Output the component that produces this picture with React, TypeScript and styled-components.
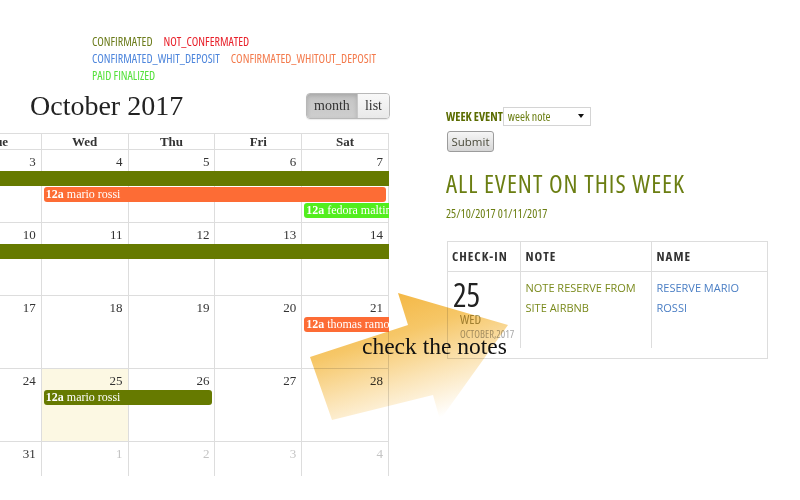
import React from "react";
import styled, { createGlobalStyle } from "styled-components";

const SERIF = `"Liberation Serif", "Times New Roman", serif`;
const SANS = `"Open Sans", "Liberation Sans", sans-serif`;

const OLIVE_BAR = "#667a00";
const ORANGE_BAR = "#fd6c35";
const GREEN_BAR = "#52ee1e";
const OLIVE_TEXT = "#6b7e12";

const GlobalStyle = createGlobalStyle`
  html, body { margin: 0; padding: 0; background: #fff; }
  body { width: 800px; height: 500px; overflow: hidden; }
  * { box-sizing: border-box; }
`;

const Page = styled.div`
  position: relative;
  display: flex;
  width: 800px;
  height: 500px;
  overflow: hidden;
`;

const LeftCol = styled.div`
  width: 390px;
  flex-shrink: 0;
  overflow: hidden;
  padding-top: 33px;
`;

const Legend = styled.div`
  margin-left: 92px;
  font-family: ${SANS};
  font-stretch: 75%;
  font-size: 12px;
  line-height: 17px;
`;

const LegendRow = styled.div`
  display: flex;
  gap: 11px;
`;

const LegendItem = styled.span<{ $c: string }>`
  color: ${(p) => p.$c};
`;

const Toolbar = styled.div`
  display: flex;
  align-items: center;
  justify-content: space-between;
  height: 28px;
  margin-top: 8px;
  margin-bottom: 13px;
`;

const Title = styled.h2`
  margin: 0 0 0 30px;
  font-family: ${SERIF};
  font-size: 28px;
  line-height: 28px;
  font-weight: normal;
  color: #222;
`;

const BtnGroup = styled.div`
  display: flex;
  height: 26px;
  border: 1px solid #b8b8b8;
  border-radius: 4px;
  overflow: hidden;
  box-shadow: 0 1px 1px rgba(0, 0, 0, 0.08);
`;

const ToolBtn = styled.button<{ $active?: boolean }>`
  border: none;
  margin: 0;
  padding: 0 7px;
  font-family: ${SERIF};
  font-size: 14px;
  color: #333;
  background: ${(p) =>
    p.$active
      ? "linear-gradient(#c4c4c4, #cecece)"
      : "linear-gradient(#f8f8f8, #e9e9e9)"};
  box-shadow: ${(p) =>
    p.$active ? "inset 0 2px 4px rgba(0,0,0,0.15)" : "none"};
  & + & {
    border-left: 1px solid #c8c8c8;
  }
`;

const Calendar = styled.div`
  width: 434px;
  margin-left: -45px;
  font-family: ${SERIF};
  color: #333;
`;

const HeadRow = styled.div`
  display: grid;
  grid-template-columns: repeat(5, 1fr);
  border-top: 1px solid #ddd;
  border-bottom: 1px solid #ddd;
`;

const HeadCell = styled.div`
  text-align: center;
  font-weight: bold;
  font-size: 13px;
  line-height: 15px;
  border-right: 1px solid #ddd;
`;

const Week = styled.div<{ $short?: boolean }>`
  display: grid;
  grid-template-columns: repeat(5, 1fr);
  grid-template-rows: ${(p) =>
    p.$short ? "20px 1fr" : "20px 16px 16px 16px 1fr"};
  height: ${(p) => (p.$short ? 34 : 73)}px;
`;

const DayBg = styled.div<{ $col: number; $today?: boolean; $last?: boolean }>`
  grid-column: ${(p) => p.$col};
  grid-row: 1 / -1;
  border-right: 1px solid #ddd;
  border-bottom: ${(p) => (p.$last ? "none" : "1px solid #ddd")};
  background: ${(p) => (p.$today ? "#fcf8e3" : "transparent")};
`;

const DayNum = styled.div<{ $col: number; $other?: boolean }>`
  grid-column: ${(p) => p.$col};
  grid-row: 1;
  text-align: right;
  padding: 4px 6px 0 0;
  font-size: 13px;
  line-height: 15px;
  color: ${(p) => (p.$other ? "#c4c4c4" : "#333")};
`;

const EventBar = styled.div<{
  $col: number;
  $span: number;
  $row: number;
  $bg: string;
  $start?: boolean;
  $end?: boolean;
}>`
  grid-column: ${(p) => p.$col} / span ${(p) => p.$span};
  grid-row: ${(p) => p.$row};
  margin: 1px ${(p) => (p.$end ? 3 : 0)}px 0 ${(p) => (p.$start ? 2 : 0)}px;
  height: 15px;
  padding-left: 2px;
  background: ${(p) => p.$bg};
  color: #fff;
  font-size: 12px;
  line-height: 15px;
  white-space: nowrap;
  overflow: hidden;
  border-radius: ${(p) =>
    `${p.$start ? 3 : 0}px ${p.$end ? 3 : 0}px ${p.$end ? 3 : 0}px ${
      p.$start ? 3 : 0
    }px`};
  & b {
    font-weight: bold;
  }
`;

const RightCol = styled.div`
  margin-left: 56px;
  padding-top: 106px;
  font-family: ${SANS};
  font-stretch: 75%;
`;

const FormRow = styled.div`
  display: flex;
  align-items: center;
  height: 20px;
`;

const Label = styled.label`
  font-size: 12px;
  font-weight: bold;
  color: #5a6c00;
`;

const SelectBox = styled.div`
  display: flex;
  align-items: center;
  justify-content: space-between;
  width: 88px;
  height: 19px;
  padding: 0 6px 0 4px;
  border: 1px solid #d4d4d4;
  font-size: 12px;
  color: ${OLIVE_TEXT};
`;

const Caret = styled.span`
  width: 0;
  height: 0;
  border-left: 3.5px solid transparent;
  border-right: 3.5px solid transparent;
  border-top: 4px solid #111;
`;

const SubmitBtn = styled.button`
  display: block;
  margin-top: 5px;
  margin-left: 1px;
  width: 47px;
  height: 21px;
  padding: 0;
  font-family: ${SANS};
  font-stretch: 100%;
  font-size: 11.5px;
  color: #4a4a3a;
  border: 1px solid #9c9c9c;
  border-radius: 3px;
  background: linear-gradient(#f6f6f6, #d6d6d6);
`;

const Heading = styled.h1`
  margin: 18px 0 0;
  font-size: 25px;
  line-height: 26px;
  letter-spacing: 1px;
  font-weight: normal;
  color: ${OLIVE_TEXT};
`;

const Dates = styled.div`
  margin-top: 11px;
  font-size: 12px;
  line-height: 14px;
  color: ${OLIVE_TEXT};
`;

const TableBox = styled.div`
  width: 321px;
  margin-top: 20px;
  margin-left: 1px;
  border: 1px solid #ddd;
  padding-bottom: 10px;
`;

const Table = styled.table`
  width: 100%;
  border-collapse: collapse;
  table-layout: fixed;
`;

const Th = styled.th<{ $w?: number }>`
  width: ${(p) => (p.$w ? `${p.$w}px` : "auto")};
  height: 29px;
  padding: 0 4px;
  text-align: left;
  font-size: 13px;
  font-weight: bold;
  letter-spacing: 1px;
  color: #333;
  border-bottom: 1px solid #ddd;
  & + & {
    border-left: 1px solid #ddd;
    padding-left: 5px;
  }
`;

const BodyRow = styled.tr`
  height: 77px;
`;

const Td = styled.td<{ $c?: string }>`
  vertical-align: top;
  padding: 6px 4px 0;
  font-size: 11px;
  line-height: 20px;
  font-stretch: 100%;
  color: ${(p) => p.$c || "#333"};
  & + & {
    border-left: 1px solid #ddd;
    padding-left: 5px;
  }
`;

const CheckCell = styled(Td)`
  font-stretch: 75%;
  padding-left: 5px;
`;

const BigDay = styled.div`
  margin-top: 1px;
  font-size: 32px;
  line-height: 32px;
  color: #222;
`;

const WeekDay = styled.div`
  margin-left: 7px;
  font-size: 13px;
  line-height: 16px;
  color: #a59c62;
`;

const MonthYear = styled.div`
  margin-left: 7px;
  font-size: 10.5px;
  line-height: 14px;
  color: #a8a8a8;
`;

const ArrowSvg = styled.svg`
  position: absolute;
  left: 300px;
  top: 285px;
  width: 215px;
  height: 140px;
  mix-blend-mode: multiply;
  pointer-events: none;
`;

const ArrowText = styled.span`
  position: absolute;
  left: 362px;
  top: 335px;
  font-family: ${SERIF};
  font-size: 23.5px;
  line-height: 23.5px;
  color: #111;
  white-space: nowrap;
  pointer-events: none;
`;

type Ev = {
  col: number;
  span: number;
  row: number;
  bg: string;
  start?: boolean;
  end?: boolean;
  title?: string;
};

type WeekData = {
  days: { n: number; other?: boolean; today?: boolean }[];
  events: Ev[];
  last?: boolean;
};

const weeks: WeekData[] = [
  {
    days: [{ n: 3 }, { n: 4 }, { n: 5 }, { n: 6 }, { n: 7 }],
    events: [
      { col: 1, span: 5, row: 2, bg: OLIVE_BAR },
      { col: 2, span: 4, row: 3, bg: ORANGE_BAR, start: true, end: true, title: "mario rossi" },
      { col: 5, span: 1, row: 4, bg: GREEN_BAR, start: true, title: "fedora maltinti" },
    ],
  },
  {
    days: [{ n: 10 }, { n: 11 }, { n: 12 }, { n: 13 }, { n: 14 }],
    events: [{ col: 1, span: 5, row: 2, bg: OLIVE_BAR }],
  },
  {
    days: [{ n: 17 }, { n: 18 }, { n: 19 }, { n: 20 }, { n: 21 }],
    events: [
      { col: 5, span: 1, row: 2, bg: ORANGE_BAR, start: true, title: "thomas ramos" },
    ],
  },
  {
    days: [{ n: 24 }, { n: 25, today: true }, { n: 26 }, { n: 27 }, { n: 28 }],
    events: [
      { col: 2, span: 2, row: 2, bg: OLIVE_BAR, start: true, end: true, title: "mario rossi" },
    ],
  },
  {
    days: [
      { n: 31 },
      { n: 1, other: true },
      { n: 2, other: true },
      { n: 3, other: true },
      { n: 4, other: true },
    ],
    events: [],
    last: true,
  },
];

export default function App() {
  return (
    <>
      <GlobalStyle />
      <Page>
        <LeftCol>
          <Legend>
            <LegendRow>
              <LegendItem $c="#6b7b1a">CONFIRMATED</LegendItem>
              <LegendItem $c="#e8202a">NOT_CONFERMATED</LegendItem>
            </LegendRow>
            <LegendRow>
              <LegendItem $c="#4e86dc">CONFIRMATED_WHIT_DEPOSIT</LegendItem>
              <LegendItem $c="#f37a4c">CONFIRMATED_WHITOUT_DEPOSIT</LegendItem>
            </LegendRow>
            <LegendRow>
              <LegendItem $c="#55e13b">PAID FINALIZED</LegendItem>
            </LegendRow>
          </Legend>

          <Toolbar>
            <Title>October 2017</Title>
            <BtnGroup>
              <ToolBtn $active>month</ToolBtn>
              <ToolBtn>list</ToolBtn>
            </BtnGroup>
          </Toolbar>

          <Calendar>
            <HeadRow>
              {["Tue", "Wed", "Thu", "Fri", "Sat"].map((d) => (
                <HeadCell key={d}>{d}</HeadCell>
              ))}
            </HeadRow>
            {weeks.map((w, wi) => (
              <Week key={wi} $short={w.last}>
                {w.days.map((d, i) => (
                  <DayBg key={`bg${i}`} $col={i + 1} $today={d.today} $last={w.last} />
                ))}
                {w.days.map((d, i) => (
                  <DayNum key={`n${i}`} $col={i + 1} $other={d.other}>
                    {d.n}
                  </DayNum>
                ))}
                {w.events.map((e, ei) => (
                  <EventBar
                    key={`e${ei}`}
                    $col={e.col}
                    $span={e.span}
                    $row={e.row}
                    $bg={e.bg}
                    $start={e.start}
                    $end={e.end}
                  >
                    {e.title && (
                      <>
                        <b>12a</b> {e.title}
                      </>
                    )}
                  </EventBar>
                ))}
              </Week>
            ))}
          </Calendar>
        </LeftCol>

        <RightCol>
          <FormRow>
            <Label>WEEK EVENT</Label>
            <SelectBox>
              <span>week note</span>
              <Caret />
            </SelectBox>
          </FormRow>
          <SubmitBtn>Submit</SubmitBtn>
          <Heading>ALL EVENT ON THIS WEEK</Heading>
          <Dates>25/10/2017 01/11/2017</Dates>
          <TableBox>
            <Table>
              <thead>
                <tr>
                  <Th $w={72}>CHECK-IN</Th>
                  <Th $w={131}>NOTE</Th>
                  <Th>NAME</Th>
                </tr>
              </thead>
              <tbody>
                <BodyRow>
                  <CheckCell>
                    <BigDay>25</BigDay>
                    <WeekDay>WED</WeekDay>
                    <MonthYear>OCTOBER,2017</MonthYear>
                  </CheckCell>
                  <Td $c="#7a8a1c">NOTE RESERVE FROM SITE AIRBNB</Td>
                  <Td $c="#4a7ec4">RESERVE MARIO ROSSI</Td>
                </BodyRow>
              </tbody>
            </Table>
          </TableBox>
        </RightCol>

        <ArrowSvg viewBox="300 285 215 140">
          <defs>
            <linearGradient
              id="arrowGrad"
              gradientUnits="userSpaceOnUse"
              x1="398"
              y1="293"
              x2="438"
              y2="418"
            >
              <stop offset="0" stopColor="#f4b846" />
              <stop offset="0.3" stopColor="#f6c768" />
              <stop offset="0.65" stopColor="#fbe4b6" />
              <stop offset="1" stopColor="#ffffff" />
            </linearGradient>
          </defs>
          <polygon
            points="310,357 408,325 398,293 508,325 440,420 433,395 332,420"
            fill="url(#arrowGrad)"
          />
        </ArrowSvg>
        <ArrowText>check the notes</ArrowText>
      </Page>
    </>
  );
}
